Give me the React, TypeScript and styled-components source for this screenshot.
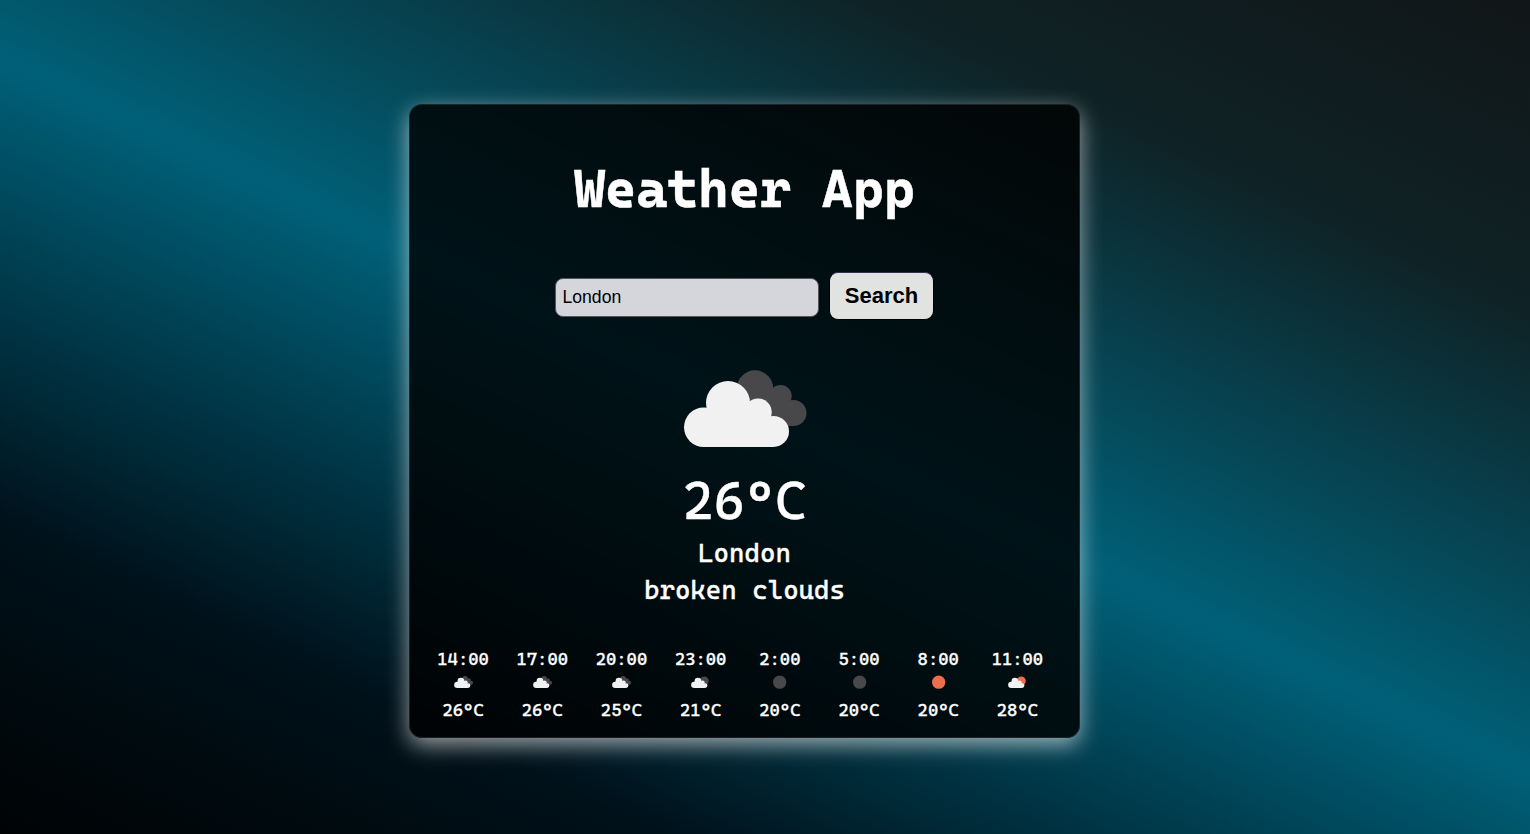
import React from "react";
import styled, { createGlobalStyle } from "styled-components";

const Global = createGlobalStyle`
  * { box-sizing: border-box; }
  html, body { margin: 0; height: 100%; }
  body { overflow: hidden; }
`;

const Page = styled.main`
  height: 100vh;
  padding: 104px 0 0 409px;
  color: #fff;
  font-family: "Cascadia Code", "DejaVu Sans Mono", monospace;
  background: linear-gradient(25deg, #000304, #00111a 20%, #006078 50%, #0f2225 80%, #111618);
`;

const Card = styled.section`
  width: 671px;
  height: 634px;
  padding: 0 14px;
  border: 1px solid rgba(80, 80, 80, 0.35);
  border-radius: 13px;
  background: rgba(0, 0, 0, 0.8);
  box-shadow: 0 7px 22px rgba(255, 255, 255, 0.6);
  display: flex;
  flex-direction: column;
  align-items: center;
`;

const Title = styled.h1`
  margin: 49px 0 0;
  height: 70px;
  line-height: 70px;
  font-size: 52.8px;
  font-weight: 700;
  -webkit-text-stroke: 0.5px #fff;
`;

const SearchBar = styled.form`
  margin-top: 48px;
  display: flex;
  align-items: flex-start;
  gap: 10px;
`;

const Input = styled.input`
  width: 264px;
  height: 39px;
  margin-top: 6px;
  padding: 0 6px 1px 6.5px;
  border: 1px solid #55555a;
  border-radius: 8px;
  background: #d4d6dc;
  color: #000;
  font: 17.6px "Liberation Sans", Arial, sans-serif;
`;

const Button = styled.button`
  width: 105px;
  height: 48px;
  padding: 0 0 1px;
  border: 1px solid #000;
  border-top-color: #33334d;
  border-radius: 9px;
  background: #e1e3e1;
  color: #000;
  font: bold 22px "Liberation Sans", Arial, sans-serif;
`;

const Current = styled.div`
  margin-top: 50px;
  display: flex;
  flex-direction: column;
  align-items: center;
`;

const Temperature = styled.div`
  margin-top: 19px;
  height: 69px;
  line-height: 70px;
  font-size: 52.8px;
  -webkit-text-stroke: 0.4px #fff;
`;

const Detail = styled.div`
  height: 37px;
  line-height: 37px;
  font-size: 26.4px;
  -webkit-text-stroke: 0.3px #fff;
`;

const Forecast = styled.div`
  margin: 38px 0 0 -0.5px;
  display: flex;
  align-self: flex-start;
`;

const Hour = styled.div`
  width: 79.2px;
  display: flex;
  flex-direction: column;
  align-items: center;
  font-size: 17.6px;
  line-height: 24px;
  -webkit-text-stroke: 0.3px #fff;
`;

const IconSlot = styled.div`
  height: 27px;
  padding-top: 4.5px;
`;

const Drawing = styled.svg`
  display: block;
  overflow: visible;
  stroke: none;
`;

type Sky = "clouds" | "nightClouds" | "night" | "sun" | "sunClouds";

const FrontCloud = () => (
  <g fill="#f1f1f1">
    <circle cx="45" cy="33" r="22" />
    <circle cx="20.7" cy="57.2" r="19.7" />
    <circle cx="75" cy="42.2" r="13.7" />
    <circle cx="90.5" cy="61.4" r="15.5" />
    <path d="M24 39L45 33L75 42L88 50V60L90.5 76.900H20.700L18 55z" />
  </g>
);

const SkyIcon = ({ sky, width, height }: { sky: Sky; width: number; height: number }) => (
  <Drawing width={width} height={height} viewBox="0 0 123 77">
    {sky === "clouds" && (
      <g fill="#48484a">
        <circle cx="72" cy="18.500" r="18.2" />
        <circle cx="97.500" cy="26.200" r="11.2" />
        <circle cx="110.500" cy="43" r="13" />
        <path d="M65 15L89 20L102 31L110.500 56H75z" />
      </g>
    )}
    {sky === "nightClouds" && <circle cx="86" cy="32" r="29" fill="#48484a" />}
    {sky === "sunClouds" && <circle cx="86" cy="32" r="29" fill="#ec6e4c" />}
    {(sky === "night" || sky === "sun") && (
      <circle cx="62.500" cy="40" r="43" fill={sky === "sun" ? "#ec6e4c" : "#48484a"} />
    )}
    {sky !== "night" && sky !== "sun" && <FrontCloud />}
  </Drawing>
);

const hours: { time: string; sky: Sky; temp: string }[] = [
  { time: "14:00", sky: "clouds", temp: "26°C" },
  { time: "17:00", sky: "clouds", temp: "26°C" },
  { time: "20:00", sky: "clouds", temp: "25°C" },
  { time: "23:00", sky: "nightClouds", temp: "21°C" },
  { time: "2:00", sky: "night", temp: "20°C" },
  { time: "5:00", sky: "night", temp: "20°C" },
  { time: "8:00", sky: "sun", temp: "20°C" },
  { time: "11:00", sky: "sunClouds", temp: "28°C" },
];

export default function App() {
  return (
    <>
      <Global />
      <Page>
        <Card>
          <Title>Weather App</Title>
          <SearchBar onSubmit={(e) => e.preventDefault()}>
            <Input defaultValue="London" />
            <Button>Search</Button>
          </SearchBar>
          <Current>
            <SkyIcon sky="clouds" width={123} height={77} />
            <Temperature>26°C</Temperature>
            <Detail>London</Detail>
            <Detail>broken clouds</Detail>
          </Current>
          <Forecast>
            {hours.map((h) => (
              <Hour key={h.time}>
                <span>{h.time}</span>
                <IconSlot>
                  <SkyIcon sky={h.sky} width={19} height={12} />
                </IconSlot>
                <span>{h.temp}</span>
              </Hour>
            ))}
          </Forecast>
        </Card>
      </Page>
    </>
  );
}
